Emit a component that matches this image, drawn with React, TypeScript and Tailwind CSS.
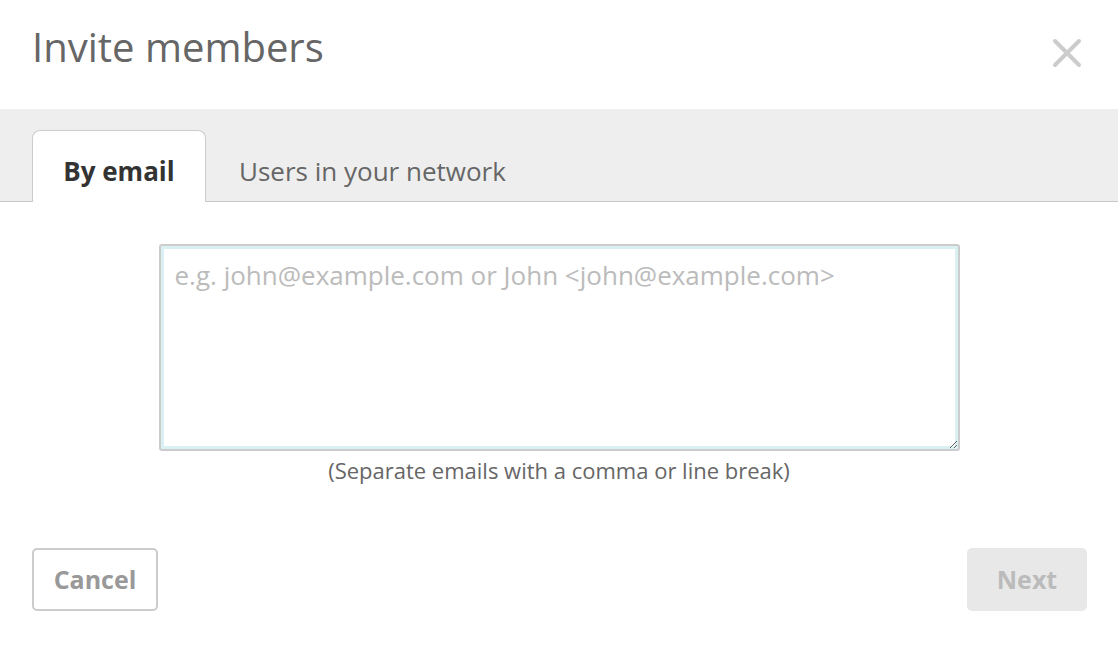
export default function App() {
  return (
    <div
      className="w-[1118px] h-[646px] bg-white overflow-hidden"
      style={{ fontFamily: '"Open Sans", sans-serif' }}
    >
      {/* header */}
      <div className="h-[109px] flex items-start justify-between pl-8 pr-[36px] pt-[27px]">
        <h1 className="text-[40px] leading-[40px] text-[#666] font-normal">Invite members</h1>
        <button className="mt-[11px] text-[#ccc]" aria-label="Close">
          <svg width="30" height="30" viewBox="0 0 30 30" fill="none">
            <path d="M3 3 L27 27 M27 3 L3 27" stroke="currentColor" strokeWidth="4" strokeLinecap="round" />
          </svg>
        </button>
      </div>

      {/* tabs */}
      <div className="h-[93px] bg-[#eee] border-b border-[#c8c8c8] flex items-end pl-8">
        <div className="w-[174px] h-[72px] -mb-px bg-white border border-b-0 border-[#ccc] rounded-t-[8px] flex items-center justify-center pt-[10px]">
          <span className="text-[26px] font-bold text-[#333]">By email</span>
        </div>
        <div className="h-[72px] -mb-px flex items-center pl-[33px] pr-[24px] pt-[10px]">
          <span className="text-[26px] text-[#666]">Users in your network</span>
        </div>
      </div>

      {/* body */}
      <div className="flex flex-col items-center pt-[42px]">
        <textarea
          className="w-[801px] h-[207px] border-2 border-[#ccc] rounded-[3px] shadow-[inset_0_0_0_3px_#daf1f3] px-[14px] py-[12px] text-[26px] leading-[34px] text-[#333] placeholder:text-[#bbb] outline-none"
          placeholder="e.g. john@example.com or John <john@example.com>"
        />
        <p className="mt-[4px] text-[22px] leading-[30px] text-[#666]">
          (Separate emails with a comma or line break)
        </p>
      </div>

      {/* footer */}
      <div className="flex justify-between pl-8 pr-[31px] mt-[63px]">
        <button className="w-[126px] h-[63px] border-2 border-[#ccc] rounded-[5px] text-[25px] font-bold text-[#999]">
          Cancel
        </button>
        <button className="w-[120px] h-[63px] bg-[#e8e8e8] rounded-[5px] text-[25px] font-bold text-[#bbb]">
          Next
        </button>
      </div>
    </div>
  );
}
